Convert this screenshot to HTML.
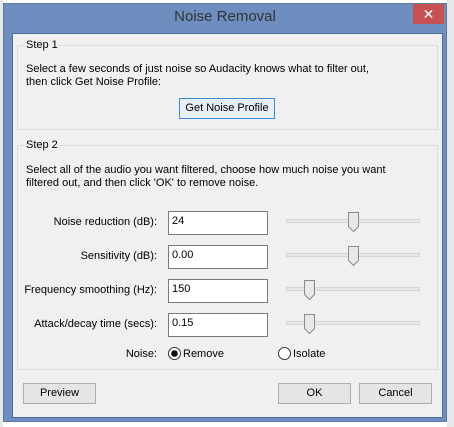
<!DOCTYPE html>
<html><head><style>
*{box-sizing:border-box;margin:0;padding:0}
body{width:454px;height:427px;overflow:hidden;background:#fff;font-family:"Liberation Sans",sans-serif;font-size:11px;color:#000;position:relative}
.a{position:absolute}
.frame{left:3px;top:3px;width:444px;height:419px;background:#6d8ebf;border:1px solid #5a78a8}
.client{left:12px;top:33px;width:431px;height:385px;background:#f0f0f0;border:1px solid #4f6e9e}
.title{left:3px;top:8px;width:444px;text-align:center;font-size:15px;color:#333}
.close{left:413px;top:4px;width:31px;height:20px;background:#c75050;color:#fff;text-align:center;font-size:14px;line-height:20px}
.grp{border:1px solid #dcdcdc}
.lbl{background:#f0f0f0;padding:0 2px}
.btn{border:1px solid #adadad;background:#e5e5e5;text-align:center;line-height:19px}
.tf{border:1px solid #7a7a7a;background:#fff;width:100px;height:24px;padding:3px 3px;font-size:11px}
.r{text-align:right;width:150px;left:7px}
.track{height:4px;background:#e7e7e7;border:1px solid #d6d6d6;width:134px;left:286px}
.thumb{width:11px;height:20px}
</style></head><body>
<div class="a" style="left:0;top:0;width:3px;height:427px;background:#e8e8e8"></div>
<div class="a" style="left:447px;top:0;width:7px;height:427px;background:#e8e8e8"></div>
<div class="a frame"></div>
<div class="a title">Noise Removal</div>
<div class="a close">✕</div>
<div class="a client"></div>
<div class="a grp" style="left:17px;top:45px;width:421px;height:85px"></div>
<div class="a lbl" style="left:24px;top:39px">Step 1</div>
<div class="a" style="left:26px;top:63px;line-height:13px">Select a few seconds of just noise so Audacity knows what to filter out,<br>then click Get Noise Profile:</div>
<div class="a btn" style="left:179px;top:98px;width:96px;height:21px;border-color:#3c8de0;background:#e8eef6">Get Noise Profile</div>
<div class="a grp" style="left:17px;top:145px;width:421px;height:225px"></div>
<div class="a lbl" style="left:24px;top:139px">Step 2</div>
<div class="a" style="left:26px;top:164px;line-height:13px">Select all of the audio you want filtered, choose how much noise you want<br>filtered out, and then click 'OK' to remove noise.</div>

<div class="a r" style="top:216px">Noise reduction (dB):</div>
<div class="a tf" style="left:168px;top:211px">24</div>
<div class="a r" style="top:250px">Sensitivity (dB):</div>
<div class="a tf" style="left:168px;top:245px">0.00</div>
<div class="a r" style="top:284px">Frequency smoothing (Hz):</div>
<div class="a tf" style="left:168px;top:279px">150</div>
<div class="a r" style="top:318px">Attack/decay time (secs):</div>
<div class="a tf" style="left:168px;top:313px">0.15</div>

<div class="a track" style="top:219px"></div><svg class="a thumb" style="left:348px;top:212px" viewBox="0 0 11 20"><path d="M0.5 0.5H10.5V14.5L5.5 19.5L0.5 14.5Z" fill="#e8e8e8" stroke="#8a8a8a"/></svg>
<div class="a track" style="top:253px"></div><svg class="a thumb" style="left:348px;top:246px" viewBox="0 0 11 20"><path d="M0.5 0.5H10.5V14.5L5.5 19.5L0.5 14.5Z" fill="#e8e8e8" stroke="#8a8a8a"/></svg>
<div class="a track" style="top:287px"></div><svg class="a thumb" style="left:304px;top:280px" viewBox="0 0 11 20"><path d="M0.5 0.5H10.5V14.5L5.5 19.5L0.5 14.5Z" fill="#e8e8e8" stroke="#8a8a8a"/></svg>
<div class="a track" style="top:321px"></div><svg class="a thumb" style="left:304px;top:314px" viewBox="0 0 11 20"><path d="M0.5 0.5H10.5V14.5L5.5 19.5L0.5 14.5Z" fill="#e8e8e8" stroke="#8a8a8a"/></svg>

<div class="a r" style="top:348px">Noise:</div>
<svg class="a" style="left:168px;top:347px" width="13" height="13"><circle cx="6.5" cy="6.5" r="6" fill="#fff" stroke="#333"/><circle cx="6.5" cy="6.5" r="3.3" fill="#111"/></svg>
<div class="a" style="left:183px;top:348px">Remove</div>
<svg class="a" style="left:278px;top:347px" width="13" height="13"><circle cx="6.5" cy="6.5" r="6" fill="#fff" stroke="#333"/></svg>
<div class="a" style="left:293px;top:348px">Isolate</div>

<div class="a btn" style="left:23px;top:383px;width:73px;height:21px">Preview</div>
<div class="a btn" style="left:278px;top:383px;width:73px;height:21px">OK</div>
<div class="a btn" style="left:359px;top:383px;width:73px;height:21px">Cancel</div>
</body></html>
